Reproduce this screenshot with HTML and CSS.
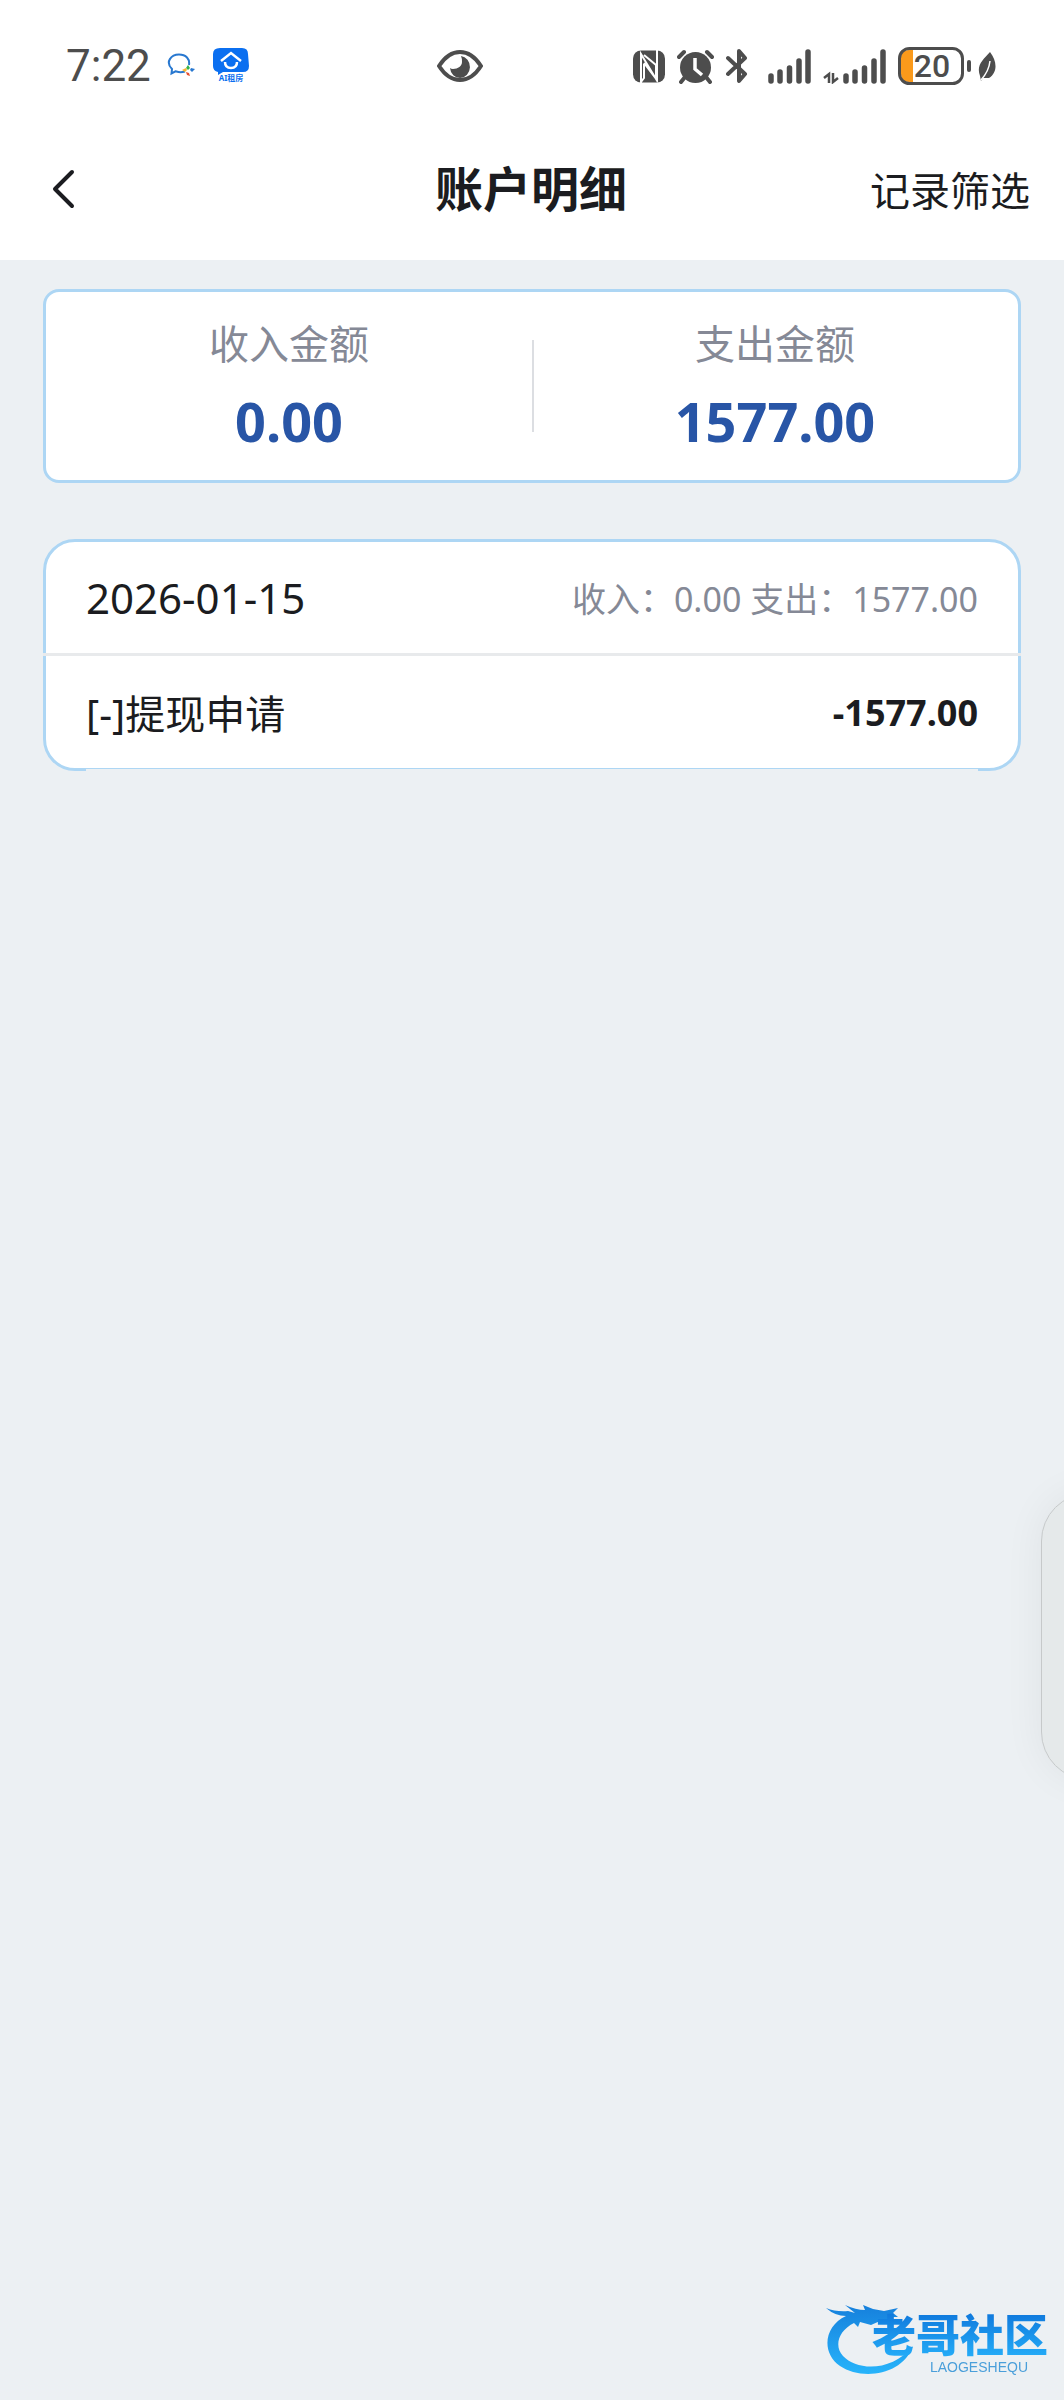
FILE: index.html
```html
<!DOCTYPE html>
<html lang="zh-CN">
<head>
    <meta charset="UTF-8">
    <meta name="viewport" content="width=device-width, initial-scale=1.0">
    <title>账户明细</title>
    <link rel="stylesheet" href="styles.css">
</head>
<body>
    <!-- 状态栏 -->
    <div class="status-bar">
        <span class="time">7:22</span>
        <svg class="icon-chat" width="28" height="26" viewBox="0 0 28 26" fill="none">
            <path d="M18 18.500C13 20 11 19 8.500 18.300L4.500 20.500L5 16C-2 9 4 1.500 12 1.500C19 1.500 23 6 22 12" stroke="#2878d0" stroke-width="2"/>
            <path d="M21 12l2 3-2 2-2-2z" fill="#35b34a"/>
            <path d="M24 15l4 1-3 3-2-2z" fill="#2878d0"/>
            <path d="M19 19l3 1 1 3-3-1z" fill="#e8502e"/>
            <path d="M15 17l4-2 1 2-2 2z" fill="#f8b62c"/>
        </svg>
        <svg class="icon-ai" width="36" height="36" viewBox="0 0 36 36">
            <path d="M7 0h22q6 0 6 6l1 12q0 6-6 6H10l-5 3v-3q-5-1-5-6V6q0-6 7-6z" fill="#0b6ff0"/>
            <path d="M8 13l10-8 10 8M12 14q0 6 6 6t6-6" fill="none" stroke="#fff" stroke-width="2.500"/>
            <text x="18" y="33" class="ai-text" text-anchor="middle">AI租房</text>
        </svg>
        <svg class="icon-eye" width="46" height="32" viewBox="0 0 46 32">
            <path d="M2 16Q11 2 23 2t21 14Q35 30 23 30T2 16z" fill="#fff" stroke="#4d4d4d" stroke-width="4"/>
            <path d="M24 6a10 11 0 1 1-11 12q1 1 3 1c5 0 9-3 9-7q0-4-1-6z" fill="#4d4d4d"/>
        </svg>
        <div class="status-right">
            <svg width="32" height="33" viewBox="0 0 32 33">
                <rect y="0.500" width="32" height="32" rx="8" fill="#4d4d4d"/>
                <path d="M8 33V4l15 25V15L11 5M11 14v14l-3 4M24 0v30l-13-17" fill="none" stroke="#fff" stroke-width="2"/>
            </svg>
            <svg width="37" height="35" viewBox="0 0 37 35" fill="none" stroke="#4d4d4d" stroke-linecap="round">
                <circle cx="18.500" cy="18.500" r="15.500" fill="#4d4d4d" stroke="none"/>
                <path d="M2 8l5-5M35 8l-5-5M8 28l-4 5M29 28l4 5" stroke-width="4"/>
                <path d="M18 9v11l7 6" stroke="#fff" stroke-width="3.500" stroke-linecap="butt"/>
            </svg>
            <svg width="22" height="35" viewBox="0 0 22 35" fill="none" stroke="#4d4d4d" stroke-width="4" stroke-linecap="round" stroke-linejoin="round">
                <path d="M2 9l17 16-6 7V2l6 7L2 25"/>
            </svg>
            <svg class="signal" width="43" height="35" viewBox="0 0 43 35" stroke="#4d4d4d" stroke-width="5.500" stroke-linecap="round">
                <path d="M3 27v5M12 23v9M21.500 19v13M31 12v20M40 3v29"/>
            </svg>
            <svg class="signal-data" width="63" height="35" viewBox="0 0 63 35">
                <path d="M23 27v5M32 23v9M41.500 19v13M51 12v20M60 3v29" stroke="#4d4d4d" stroke-width="5.500" stroke-linecap="round"/>
                <path d="M6 34V25L1 29M10 24v9l5-4" fill="none" stroke="#4d4d4d" stroke-width="2.500"/>
            </svg>
            <svg class="battery" width="74" height="38" viewBox="0 0 74 38">
                <path d="M15 3h-4q-8 0-8 8v16q0 8 8 8h4z" fill="#fb9a1b"/>
                <rect x="1.500" y="1.500" width="63" height="35" rx="10" fill="none" stroke="#4d4d4d" stroke-width="3"/>
                <rect x="69" y="13" width="4" height="12" rx="2" fill="#4d4d4d"/>
                <text x="34" y="30" class="battery-text" text-anchor="middle">20</text>
            </svg>
            <svg width="18" height="29" viewBox="0 0 18 29">
                <path d="M12 0c7 9 8 20-1 26H5L3 29 2 24C-2 13 5 8 12 0z" fill="#4d4d4d"/>
                <path d="M12 9Q11 19 3 28" fill="none" stroke="#fff" stroke-width="1.500"/>
            </svg>
        </div>
    </div>

    <!-- 导航 -->
    <header class="nav">
        <button class="back" type="button" aria-label="返回">
            <svg width="24" height="40" viewBox="0 0 24 40" fill="none" stroke="#1b1c20" stroke-width="4" stroke-linecap="round" stroke-linejoin="round">
                <path d="M20 3L3 20l17 17"/>
            </svg>
        </button>
        <h1>账户明细</h1>
        <button class="filter" type="button">记录筛选</button>
    </header>

    <main>
        <!-- 金额汇总 -->
        <dl class="summary">
            <div class="summary-item">
                <dt>收入金额</dt>
                <dd>0.00</dd>
            </div>
            <div class="summary-item">
                <dt>支出金额</dt>
                <dd>1577.00</dd>
            </div>
        </dl>

        <!-- 明细列表 -->
        <section class="day">
            <div class="row day-head">
                <h2>2026-01-15</h2>
                <span class="day-total">收入：0.00 支出：1577.00</span>
            </div>
            <div class="row">
                <span class="record-name">[-]提现申请</span>
                <strong class="record-amount">-1577.00</strong>
            </div>
        </section>
    </main>

    <div class="side-handle"></div>

    <!-- 水印 -->
    <div class="watermark">
        <svg class="dragon" width="92" height="72" viewBox="0 0 92 72">
            <defs>
                <linearGradient id="blue" x1="0" y1="0" x2="0" y2="1">
                    <stop offset="0" stop-color="#1680dc"/>
                    <stop offset="1" stop-color="#27b4fb"/>
                </linearGradient>
            </defs>
            <path fill="url(#blue)" d="M0 4Q10 8 22 7L29 9 19 1Q30 6 39 6L37 1 47 5 58 7 72 4 67 9 72 13 62 13 70 17 66 20 54 17 45 21 34 18 32 23 28 19C12 27 8 42 17 52C31 67 66 68 87 42C77 71 36 77 14 62C-5 49-2 22 20 12Q9 12 0 4z"/>
        </svg>
        <div class="brand">
            <span class="brand-name">老哥社区</span>
            <span class="brand-latin">LAOGESHEQU</span>
        </div>
    </div>
</body>
</html>
```
FILE: styles.css
```css
* {
    box-sizing: border-box;
}
body {
    margin: 0;
    min-height: 100vh;
    font-family: "Noto Sans", "Noto Sans CJK SC", sans-serif;
    font-size: 40px;
    color: #1b1c20;
    background-color: #ecf0f3;
}
h1, h2, dl, dd {
    margin: 0;
}
svg {
    display: block;
    flex-shrink: 0;
}
button {
    padding: 0;
    border: 0;
    background: none;
    font: inherit;
    color: inherit;
}

/* 状态栏 */
.status-bar {
    display: flex;
    align-items: center;
    height: 132px;
    padding: 0 68px 0 66px;
    background-color: #fff;
    color: #4d4d4d;
}
.time {
    font-family: Roboto, sans-serif;
    font-size: 44px;
}
.icon-chat {
    margin-left: 16px;
}
.icon-ai {
    margin-left: 18px;
}
.ai-text {
    font-size: 8px;
    font-weight: 700;
    fill: #0b6ff0;
}
.icon-eye {
    margin-left: 188px;
}
.status-right {
    display: flex;
    align-items: center;
    gap: 12px;
    margin-left: auto;
}
.signal {
    margin-left: 8px;
}
.battery-text {
    font-family: Roboto, sans-serif;
    font-size: 32px;
    font-weight: 500;
    fill: #4d4d4d;
}
.status-right svg:last-child {
    margin-left: -6px;
}

/* 导航 */
.nav {
    display: grid;
    grid-template-columns: 1fr auto 1fr;
    align-items: center;
    height: 128px;
    padding: 0 34px 14px 52px;
    background-color: #fff;
}
.back {
    justify-self: start;
}
h1 {
    font-size: 48px;
    line-height: 64px;
    margin-right: 20px;
}
.filter {
    justify-self: end;
}

main {
    padding: 29px 43px;
}

/* 金额汇总 */
.summary {
    display: flex;
    padding: 24px 0;
    border: 3px solid #add6f4;
    border-radius: 16px;
    background-color: #fff;
}
.summary-item {
    flex: 1;
    text-align: center;
}
.summary-item + .summary-item {
    background: linear-gradient(#dcdee2, #dcdee2) left center / 2px 92px no-repeat;
}
dt {
    line-height: 56px;
    color: #858996;
}
dd {
    margin-top: 14px;
    font-size: 54px;
    line-height: 70px;
    font-weight: 700;
    color: #2855a6;
}

/* 明细列表 */
.day {
    position: relative;
    margin-top: 56px;
    border: 3px solid #add6f4;
    border-radius: 32px;
    background-color: #fff;
}
.day::after {
    content: "";
    position: absolute;
    left: 40px;
    right: 40px;
    bottom: -3px;
    height: 2px;
    background-color: #ecf0f3;
}
.row {
    display: flex;
    align-items: center;
    justify-content: space-between;
    height: 112px;
    padding: 0 40px;
}
.day-head {
    height: 114px;
    margin: 0 -3px;
    padding: 0 43px;
    border-bottom: 3px solid #e8eaec;
}
h2 {
    font-size: 42px;
    font-weight: 400;
}
.day-total {
    font-size: 34px;
    color: #858996;
}
.record-amount {
    font-size: 36px;
}

/* 侧边把手 */
.side-handle {
    position: fixed;
    right: -77px;
    bottom: 620px;
    width: 100px;
    height: 287px;
    border: 1px solid #c6c9ca;
    border-radius: 48px;
    background-color: #e5e9ea;
    box-shadow: 0 0 40px rgba(0, 0, 0, 0.06);
}

/* 水印 */
.watermark {
    position: fixed;
    right: 16px;
    bottom: 24px;
    display: flex;
    align-items: flex-start;
}
.dragon {
    margin-right: -46px;
}
.brand {
    display: flex;
    flex-direction: column;
    padding-top: 8px;
}
.brand-name {
    font-size: 44px;
    line-height: 46px;
    font-weight: 900;
    color: transparent;
    background: linear-gradient(#0f78dc, #25adf8);
    background-clip: text;
    -webkit-background-clip: text;
}
.brand-latin {
    align-self: flex-end;
    margin-right: 20px;
    font-family: "Liberation Sans", Arial, sans-serif;
    font-size: 14px;
    line-height: 18px;
    color: #4a9fda;
}
```
